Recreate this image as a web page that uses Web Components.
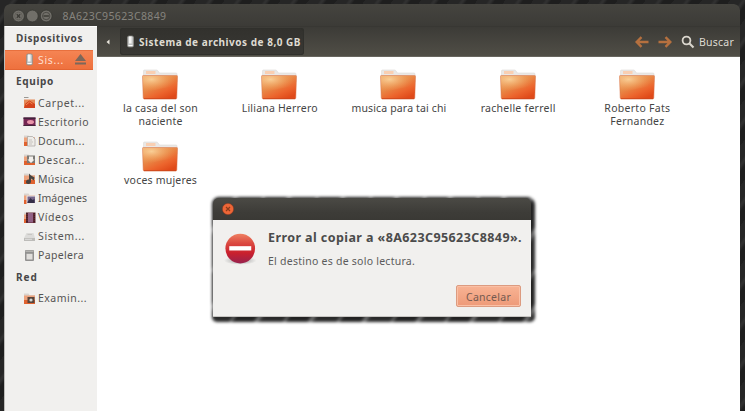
<!DOCTYPE html>
<html lang="es">
<head>
<meta charset="utf-8">
<title>8A623C95623C8849</title>
<style>
html,body{margin:0;height:100%;overflow:hidden}
body{font-family:"Noto Sans","Open Sans",sans-serif;font-size:10.5px;color:#4a4a4a}
</style>
</head>
<body>
<desktop-screen>
  <file-window>
    <title-bar slot="title"></title-bar>
    <side-bar slot="side"></side-bar>
    <tool-bar slot="tools"></tool-bar>
    <folder-grid slot="files">
      <folder-item lines="la casa del son:75|naciente:44"></folder-item>
      <folder-item lines="Liliana Herrero:76"></folder-item>
      <folder-item lines="musica para tai chi:95"></folder-item>
      <folder-item lines="rachelle ferrell:75"></folder-item>
      <folder-item lines="Roberto Fats:66|Fernandez:54"></folder-item>
      <folder-item lines="voces mujeres:73"></folder-item>
    </folder-grid>
  </file-window>
  <error-dialog slot="dialog"></error-dialog>
</desktop-screen>
<script>
function define(name, html, ready) {
  customElements.define(name, class extends HTMLElement {
    connectedCallback() {
      if (this.shadowRoot) return;
      this.attachShadow({mode: 'open'}).innerHTML = typeof html === 'function' ? html(this) : html;
      if (ready) ready(this);
    }
  });
}

/* Label that tracks its letters out or in so that the line is w pixels wide */
define('fit-text', '<style>:host{display:inline-block;white-space:nowrap}span{display:inline-block}</style><span><slot></slot></span>', el => {
  const s = el.shadowRoot.querySelector('span'), w = +el.getAttribute('w');
  const n = el.textContent.length, have = s.getBoundingClientRect().width;
  s.style.letterSpacing = ((w - have) / n) + 'px';
});

const G = {
  drive: '<rect x="3.5" y="1" width="6" height="11" rx="1.5" fill="#bfc1c1" stroke="#8b8985" stroke-width=".7"/><rect x="5" y="1.5" width="2.6" height="7" fill="#f5f5f3"/><path d="M4.5 10.5h4" stroke="#fff"/>',
  base: '<path d="M1 1.500h4.500l1 1.500H12v2H1z" fill="#d9d4cf"/><path d="M1 3.500h11V12H1z" fill="#eda27c"/><path d="M1 8h11v4H1z" fill="#e0622f"/>',
  home: '<path d="M1 1h4l1 1H1z" fill="#9a9792"/><path d="M1 3.500h11V12H1z" fill="#e58a58"/><path d="M1 12l1.500-4.500 4-3 5.500 3.500v4z" fill="#d4431c"/><path d="M3 9l3.500-3 3 2" stroke="#f08a50" fill="none"/>',
  desk: '<rect x=".5" y="2.500" width="12" height="8.500" fill="#742653"/><path d="M.5 2.500h12v1.500H.5z" fill="#41233b"/><ellipse cx="7.500" cy="7" rx="3.500" ry="2" fill="#e995a9"/><path d="M.5 10.500h12" stroke="#442539"/>',
  docs: '<path d="M4.500 2.500h5l2.500 2.500V12H4.500z" fill="#eeece8" stroke="#a6a29e" stroke-width=".7"/><path d="M6 6h3M6 8h4M6 10h3" stroke="#b6b2ae" stroke-width=".7"/>',
  down: '<path d="M4 2.500h8V10H4z" fill="#7b7975"/><path d="M6 3.500h4v3h1.500L8 10 4.500 6.500H6z" fill="#f3efeb"/>',
  music: '<path d="M6 1.500l2 2 3.500 2-.6 3L8 6.500V10a2.500 2.300 0 1 1-2-2.500z" fill="#474340"/>',
  pics: '<path d="M3.500 3.500H12.500V12H3.500z" fill="#f1ecec"/><path d="M4.500 4.500H12V11H4.500z" fill="#75658a"/><path d="M4.500 10l3-4 2 2 2-1v4h-7z" fill="#352f48"/>',
  video: '<path d="M3 1.500h9.500V12H3z" fill="#5f2732"/><path d="M5 2h5v9.500H5z" fill="#916185"/><path d="M4 2v10M11.300 2v10" stroke="#351a21" stroke-dasharray="1 1"/>',
  disk: '<path d="M3.500 3h7L12 8H1z" fill="#dcdbd9"/><path d="M1 8h11v3H1z" fill="#bdbcb9"/><path d="M2 9.300h7" stroke="#eee" stroke-width=".7"/><path d="M4.500 4.500h4.500" stroke="#c8c6c3"/>',
  trash: '<rect x="2" y="1" width="9" height="11" rx="1" fill="#929190"/><path d="M2.500 1.500h8V3h-8z" fill="#b4b3b0"/><rect x="3.500" y="4.800" width="6" height="5.700" fill="#e0dedb"/>',
  net: '<path d="M4.500 5h7v6h-7z" fill="#59443b"/><circle cx="8" cy="8" r="1.600" fill="#cfd9d6"/>'
};
define('place-icon', el => {
  const k = el.getAttribute('kind'), onFolder = ['docs','down','music','pics','video','net'].includes(k);
  return `<style>:host{display:block;width:13px;height:13px;flex:none}svg{display:block}</style>
  <svg width="13" height="13" viewBox="0 0 13 13">${onFolder ? G.base : ''}${G[k]}</svg>`;
});

define('title-bar', `<style>
:host{display:flex;align-items:center;height:22px;padding:1px 0 0 7.500px;box-sizing:border-box;border-radius:6px 6px 0 0;background:linear-gradient(#45443f,#3c3b37);color:#86847e;font-size:10.5px}
svg{display:block;margin-right:10px}
fit-text{line-height:16px}</style>
<svg width="41" height="14" viewBox="0 0 41 14"><g fill="#716f69" stroke="#34332f" stroke-width=".7"><circle cx="6.500" cy="7" r="5.900"/><circle cx="20.300" cy="7" r="5.900"/><circle cx="34.200" cy="7" r="5.900"/></g>
<g stroke="#3c3b36" stroke-width="1.400" fill="none"><path d="M4.800 5.300l3.400 3.400M8.200 5.300L4.800 8.700"/><circle cx="6.500" cy="7" r="3.800" stroke="#5a5852" stroke-width=".7"/><circle cx="34.200" cy="7" r="3.700" stroke-width=".7"/><path d="M31.500 7h5.400"/></g></svg>
<fit-text w="104">8A623C95623C8849</fit-text>`);

define('side-item', el => `<style>
:host{display:flex;align-items:center;height:19.100px;padding-left:17.500px;box-sizing:border-box;font-size:10.5px;color:#555453}
:host([active]){height:20px;background:linear-gradient(#f58453,#ee713e);color:#ffdfd0;border-top:1px solid #e8703e;border-bottom:1px solid #e36533;margin-right:4px}
fit-text{margin-left:2.500px;line-height:18px}
svg{margin-left:auto;margin-right:6px}</style>
<place-icon kind="${el.getAttribute('kind')}"></place-icon><fit-text w="${el.getAttribute('w')}">${el.getAttribute('label')}</fit-text>
${el.hasAttribute('active') ? '<svg width="13" height="13" viewBox="0 0 13 13"><path d="M6.500 1L12 8H1z" fill="#7c675a"/><path d="M1 9.500h11v2H1z" fill="#7c675a"/></svg>' : ''}`);

define('side-head', `<style>:host{display:flex;align-items:center;padding-left:11px;font-weight:700;font-size:10px;color:#474747}</style><slot></slot>`);

define('side-bar', `<style>
:host{display:block;background:#f1f0ee;border-left:1px solid #bdbcb9;box-sizing:border-box;height:100%;box-shadow:inset 0 1px #fff}
.a{height:23.500px}.b{height:23.500px}.c{height:24px;}</style>
<side-head class="a"><fit-text w="67">Dispositivos</fit-text></side-head>
<side-item active kind="drive" w="26" label="Sis..."></side-item>
<side-head class="b"><fit-text w="38">Equipo</fit-text></side-head>
<side-item kind="home" w="47" label="Carpet..."></side-item>
<side-item kind="desk" w="51" label="Escritorio"></side-item>
<side-item kind="docs" w="47" label="Docum..."></side-item>
<side-item kind="down" w="47" label="Descar..."></side-item>
<side-item kind="music" w="36" label="Música"></side-item>
<side-item kind="pics" w="49" label="Imágenes"></side-item>
<side-item kind="video" w="36" label="Vídeos"></side-item>
<side-item kind="disk" w="47" label="Sistem..."></side-item>
<side-item kind="trash" w="46" label="Papelera"></side-item>
<side-head class="c"><fit-text w="22">Red</fit-text></side-head>
<side-item kind="net" w="49" label="Examin..."></side-item>`);

define('tool-bar', `<style>
:host{display:flex;align-items:center;height:31px;box-sizing:border-box;background:linear-gradient(#3c3b37,#504e46);border-top:1px solid #383733;border-bottom:1px solid #68665f;color:#dfdbd2}
.back{margin:0 9px 0 8px}
.crumb{display:flex;align-items:center;height:27px;width:184px;border-radius:3px;background:linear-gradient(#32312d,#393834);box-shadow:inset 0 0 0 1px #30302c;font-weight:700;font-size:10px;padding-left:4px;box-sizing:border-box}
.crumb fit-text{margin-left:2px;line-height:18px;margin-top:1px}
.nav{margin-left:auto;margin-right:9px}.mag{margin-right:4px}
.find{margin-right:6px;line-height:18px;font-size:10.5px}
svg{display:block;flex:none}</style>
<svg class="back" width="6" height="8" viewBox="0 0 6 8"><path d="M4.500 1.500v5L1.500 4z" fill="#e9e5dc"/></svg>
<div class="crumb"><place-icon kind="drive"></place-icon><fit-text w="162">Sistema de archivos de 8,0 GB</fit-text></div>
<svg class="nav" width="38" height="14" viewBox="0 0 38 14" fill="none" stroke="#b5703f" stroke-width="2.400"><path d="M14.500 7H3.500M7.500 2.200L2.700 7l4.800 4.800M24.500 7h11M31.500 2.200L36.300 7l-4.800 4.800"/></svg>
<svg class="mag" width="14" height="14" viewBox="0 0 14 14" fill="none" stroke="#d9d5cc"><circle cx="5.500" cy="5.500" r="3.900" stroke-width="1.800"/><path d="M8.500 8.500l4 4" stroke-width="2.200"/></svg>
<fit-text class="find" w="35">Buscar</fit-text>`);

define('folder-item', el => `<style>
:host{display:flex;flex-direction:column;align-items:center;color:#454545;font-size:10.5px}
svg{display:block;margin-bottom:1px}fit-text{line-height:13px;margin-left:1px}</style>
<svg width="38" height="32" viewBox="0 0 38 32"><defs>
<linearGradient id="f" x1="0" y1="0" x2=".7" y2="1"><stop offset="0" stop-color="#efae70"/><stop offset=".45" stop-color="#e88a48"/><stop offset=".75" stop-color="#ec652d"/><stop offset="1" stop-color="#e04a19"/></linearGradient>
<radialGradient id="h" cx=".25" cy=".2" r=".7"><stop offset="0" stop-color="#fbd7a0" stop-opacity=".85"/><stop offset="1" stop-color="#f3a25c" stop-opacity="0"/></radialGradient></defs>
<path d="M2.500 12V2q0-1 1-1h12q1 0 1.500 1l1.500 2H35q1 0 1 1v8z" fill="#eae8e6" stroke="#dddad7" stroke-width=".6"/>
<path d="M5 2h9.500v3H5z" fill="#f9cfb2"/>
<path d="M1.500 7.500Q1.300 6.500 2.300 6.500H35.700Q36.700 6.500 36.500 7.500L35.800 29Q35.700 30 34.700 30H3.300Q2.300 30 2.200 29z" fill="url(#f)" stroke="#d9744a" stroke-width=".5"/>
<path d="M2 7H36.200L36 18Q24 18 14 21T2.500 24z" fill="url(#h)"/>
<path d="M3 29.600h32" stroke="#cb4219" stroke-width=".8"/></svg>
${el.getAttribute('lines').split('|').map(l => { const [t, w] = l.split(':'); return `<fit-text w="${w}">${t}</fit-text>`; }).join('')}`);

define('folder-grid', `<style>:host{display:grid;grid-template-columns:repeat(5,119.200px);grid-auto-rows:72px;padding:11.500px 0 0 3.500px;box-sizing:border-box;background:#fff;height:100%}</style><slot></slot>`);

define('file-window', `<style>
:host{display:grid;grid-template:22px 31px 1fr / 93px 1fr;width:736px;height:407px;border-radius:6px 6px 0 0;overflow:hidden}
slot{display:block;min-width:0;min-height:0}
.t{grid-area:1/1/2/3}.s{grid-area:2/1/4/2}.b{grid-area:2/2}.f{grid-area:3/2}</style>
<slot class="t" name="title"></slot><slot class="s" name="side"></slot><slot class="b" name="tools"></slot><slot class="f" name="files"></slot>`);

define('error-dialog', `<style>
:host{display:block;position:relative;isolation:isolate;width:318px;height:119px}
:host::before{content:"";position:absolute;z-index:-1;inset:-1px -4px -5px -1px;border-radius:7px 8px 5px 5px;filter:blur(1.500px);background:repeating-linear-gradient(125deg,#222 0 17px,#777 19px 20px,#2a2a2a 23px 41px,#666 42px 44px)}
.bar{height:22px;border-radius:6px 6px 0 0;background:linear-gradient(#4b4a45,#3d3c38 65%,#3a3935);padding:5px 0 0 8.500px;box-sizing:border-box}
svg{display:block}
.body{display:flex;height:97px;background:#f1f0ee;box-sizing:border-box;padding:9px 9px 9px 11px;border-bottom:1px solid #c7c5c2}
.text{flex:1;margin-left:11.500px;display:flex;flex-direction:column;align-items:flex-start}
.h{font-weight:700;font-size:12.5px;line-height:18px;color:#4b4b4b}
.p{font-size:10.5px;line-height:16px;margin-top:6px;color:#5b5b5b}
.btn{align-self:flex-end;margin-top:auto;margin-right:1px;margin-bottom:0;display:flex;align-items:center;justify-content:center;width:65px;height:22px;box-sizing:border-box;border:1px solid #dc9b80;border-radius:2px;background:linear-gradient(#f8b394,#ee9a78);box-shadow:inset 0 0 0 1px #fac0a5;color:#735a50;font:inherit;font-size:10.5px;padding:1px 0 0}
.icon{margin-top:4px}</style>
<div class="bar"><svg width="12" height="12" viewBox="0 0 12 12"><circle cx="6" cy="6" r="5.700" fill="#ed6637" stroke="#783520" stroke-width=".5"/><path d="M4 4l4 4M8 4L4 8" stroke="#8a3b1a" stroke-width="1.200"/></svg></div>
<div class="body"><svg class="icon" width="34" height="34" viewBox="0 0 34 34"><defs><linearGradient id="r" x2="0" y2="1"><stop offset="0" stop-color="#ef8162"/><stop offset=".3" stop-color="#dc4c42"/><stop offset=".65" stop-color="#ca202d"/><stop offset="1" stop-color="#98224e"/></linearGradient><radialGradient id="s"><stop stop-color="#999"/><stop offset="1" stop-color="#999" stop-opacity="0"/></radialGradient></defs>
<ellipse cx="17" cy="28" rx="17" ry="4.500" fill="url(#s)"/><circle cx="17" cy="15.500" r="15.500" fill="url(#r)"/><rect x="5.500" y="13" width="23" height="4.500" fill="#fff"/></svg>
<div class="text"><fit-text class="h" w="254">Error al copiar a «8A623C95623C8849».</fit-text>
<fit-text class="p" w="147">El destino es de solo lectura.</fit-text>
<button class="btn"><fit-text w="45">Cancelar</fit-text></button></div></div>`);

define('desktop-screen', `<style>
:host{display:block;position:relative;width:745px;height:411px;overflow:hidden;box-sizing:border-box;padding:4px 0 0 4px;background:repeating-linear-gradient(125deg,#262626 0 9px,#303030 11px 12px,#1e1e1e 15px 23px)}
.d{position:absolute;left:213px;top:198px}</style>
<slot></slot><div class="d"><slot name="dialog"></slot></div>`);
</script>
</body>
</html>
